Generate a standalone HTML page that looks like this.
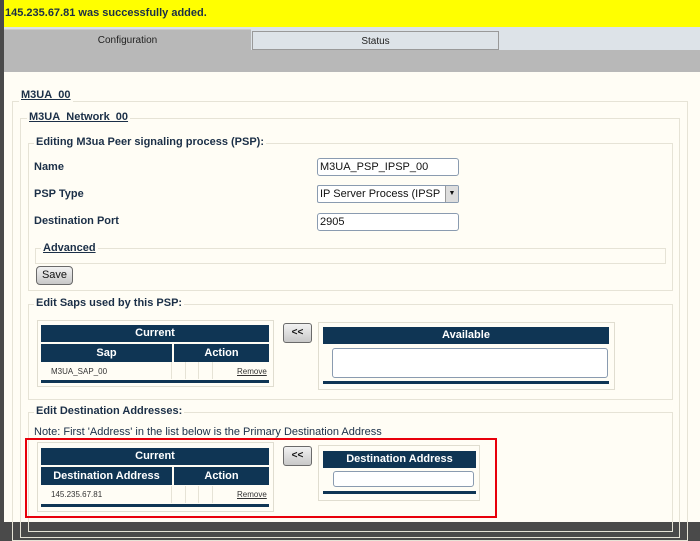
<!DOCTYPE html>
<html><head><meta charset="utf-8"><style>
*{box-sizing:border-box;margin:0;padding:0}
body{width:700px;height:522px;overflow:hidden;background:#4a4a4a;font-family:"Liberation Sans",Arial,sans-serif;position:relative;color:#1b2f47}
.a{position:absolute}
.fs{position:absolute;border:1px solid #e6e3d6}
.lg{position:absolute;background:#fffdf5;font-weight:bold;font-size:11px;padding:0 2px;line-height:13px}
.u{text-decoration:underline}
.lbl{position:absolute;font-weight:bold;font-size:11px}
.inp{position:absolute;background:#fff;border:1px solid #8a9bb0;border-radius:3px;font-size:11px;padding:2px 2px;line-height:12px;color:#111}
.hd{position:absolute;background:#0f3554;color:#fff;font-weight:bold;font-size:11px;text-align:center}
.bar{position:absolute;background:#0f3554;height:3px}
.box{position:absolute;border:1px solid #e0ddd0;background:#fffdf5}
.btn{position:absolute;background:linear-gradient(#f2f2f2,#c8c8c8);border:1px solid #6a6a6a;border-radius:3px;font-size:10px;font-weight:bold;text-align:center;color:#111}
.cell{position:absolute;border-right:1px solid #e6e3d6;height:17px}
.rm{position:absolute;font-size:8px;text-decoration:underline;color:#333}
</style></head><body>
<div class="a" style="left:4px;top:0;width:696px;height:27px;background:#ffff00"></div>
<div class="a" style="left:5px;top:7px;font-size:11px;font-weight:bold;color:#1b2f47">145.235.67.81 was successfully added.</div>
<div class="a" style="left:4px;top:27px;width:696px;height:23px;background:#dde3e8"></div>
<div class="a" style="left:4px;top:29px;width:247px;height:22px;background:#b8b8b8;border-top:1px solid #ccc"></div>
<div class="a" style="left:4px;top:35px;width:247px;text-align:center;font-size:10px;color:#222">Configuration</div>
<div class="a" style="left:252px;top:31px;width:247px;height:19px;background:#dde3e8;border:1px solid #999"></div>
<div class="a" style="left:252px;top:36px;width:247px;text-align:center;font-size:10px;color:#222">Status</div>
<div class="a" style="left:4px;top:50px;width:696px;height:22px;background:#b8b8b8"></div>
<div class="a" style="left:4px;top:72px;width:696px;height:450px;background:#fffdf5"></div>

<div class="fs" style="left:12px;top:101px;width:676px;height:440px"></div>
<div class="lg u" style="left:19px;top:89px">M3UA_00</div>
<div class="fs" style="left:20px;top:118px;width:660px;height:420px"></div>
<div class="lg u" style="left:27px;top:111px">M3UA_Network_00</div>

<div class="fs" style="left:28px;top:143px;width:645px;height:148px"></div>
<div class="lg" style="left:34px;top:136px">Editing M3ua Peer signaling process (PSP):</div>
<div class="lbl" style="left:34px;top:161px">Name</div>
<div class="lbl" style="left:34px;top:188px">PSP Type</div>
<div class="lbl" style="left:34px;top:215px">Destination Port</div>
<div class="inp" style="left:317px;top:158px;width:142px;height:18px">M3UA_PSP_IPSP_00</div>
<div class="inp" style="left:317px;top:185px;width:142px;height:18px;border-radius:2px;overflow:hidden;white-space:nowrap">IP Server Process (IPSP<span style="position:absolute;right:0;top:0;width:13px;height:16px;background:#ddd;border-left:1px solid #999;font-size:7px;text-align:center;line-height:16px">▼</span></div>
<div class="inp" style="left:317px;top:213px;width:142px;height:18px">2905</div>
<div class="fs" style="left:35px;top:248px;width:631px;height:16px"></div>
<div class="lg u" style="left:41px;top:242px">Advanced</div>
<div class="btn" style="left:36px;top:266px;width:37px;height:19px;font-weight:normal;font-size:11px;line-height:17px;border-radius:4px">Save</div>

<div class="fs" style="left:28px;top:304px;width:645px;height:96px"></div>
<div class="lg" style="left:34px;top:297px">Edit Saps used by this PSP:</div>
<div class="box" style="left:37px;top:320px;width:237px;height:67px"></div>
<div class="hd" style="left:41px;top:325px;width:228px;height:17px;line-height:17px">Current</div>
<div class="hd" style="left:41px;top:344px;width:131px;height:18px;line-height:18px">Sap</div>
<div class="hd" style="left:174px;top:344px;width:95px;height:18px;line-height:18px">Action</div>
<div class="a" style="left:51px;top:367px;font-size:8px;color:#333">M3UA_SAP_00</div>
<div class="cell" style="left:41px;top:362px;width:131px"></div>
<div class="cell" style="left:172px;top:362px;width:14px"></div>
<div class="cell" style="left:186px;top:362px;width:13px"></div>
<div class="cell" style="left:199px;top:362px;width:14px"></div>
<div class="rm" style="left:237px;top:367px">Remove</div>
<div class="bar" style="left:41px;top:380px;width:228px"></div>
<div class="btn" style="left:283px;top:323px;width:29px;height:20px;line-height:17px">&lt;&lt;</div>
<div class="box" style="left:318px;top:322px;width:297px;height:68px"></div>
<div class="hd" style="left:323px;top:327px;width:286px;height:17px;line-height:17px">Available</div>
<div class="inp" style="left:332px;top:348px;width:276px;height:30px"></div>
<div class="bar" style="left:323px;top:381px;width:286px"></div>

<div class="fs" style="left:28px;top:412px;width:645px;height:120px"></div>
<div class="lg" style="left:34px;top:405px">Edit Destination Addresses:</div>
<div class="a" style="left:34px;top:426px;font-size:11px">Note: First 'Address' in the list below is the Primary Destination Address</div>
<div class="a" style="left:25px;top:438px;width:472px;height:80px;border:2px solid #e8000b"></div>
<div class="box" style="left:37px;top:442px;width:237px;height:70px"></div>
<div class="hd" style="left:41px;top:448px;width:228px;height:17px;line-height:17px">Current</div>
<div class="hd" style="left:41px;top:467px;width:131px;height:18px;line-height:18px">Destination Address</div>
<div class="hd" style="left:174px;top:467px;width:95px;height:18px;line-height:18px">Action</div>
<div class="a" style="left:51px;top:490px;font-size:8px;color:#333">145.235.67.81</div>
<div class="cell" style="left:41px;top:486px;width:131px"></div>
<div class="cell" style="left:172px;top:486px;width:14px"></div>
<div class="cell" style="left:186px;top:486px;width:13px"></div>
<div class="cell" style="left:199px;top:486px;width:14px"></div>
<div class="rm" style="left:237px;top:490px">Remove</div>
<div class="bar" style="left:41px;top:504px;width:228px"></div>
<div class="btn" style="left:283px;top:446px;width:29px;height:20px;line-height:17px">&lt;&lt;</div>
<div class="box" style="left:318px;top:445px;width:162px;height:56px"></div>
<div class="hd" style="left:323px;top:451px;width:153px;height:17px;line-height:17px">Destination Address</div>
<div class="inp" style="left:333px;top:471px;width:141px;height:16px"></div>
<div class="bar" style="left:323px;top:491px;width:153px"></div>
</body></html>
